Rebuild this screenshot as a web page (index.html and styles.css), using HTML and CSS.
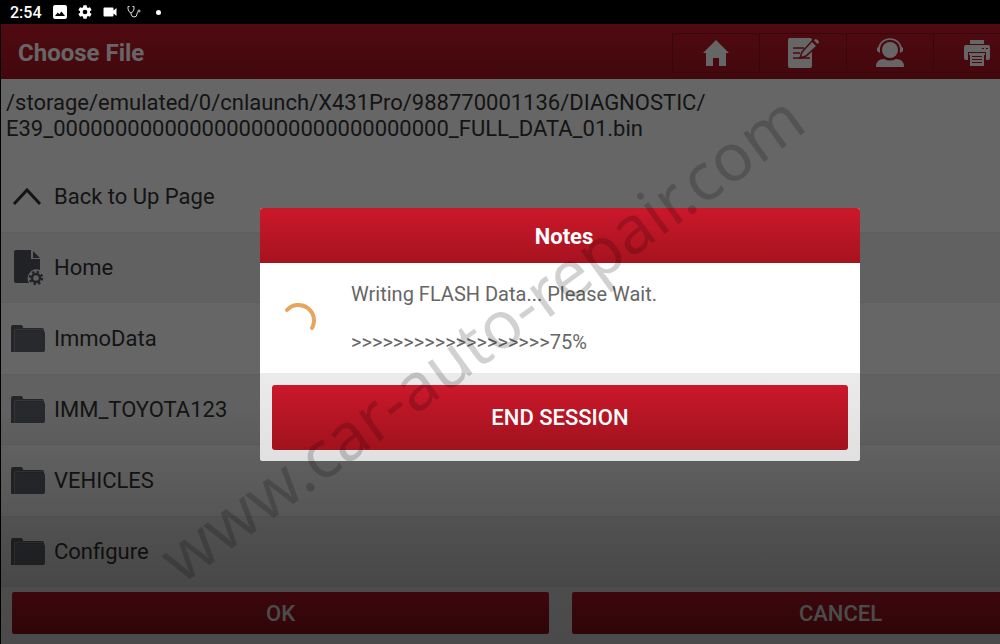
FILE: index.html
```html
<!DOCTYPE html>
<html lang="en">
<head>
    <meta charset="UTF-8">
    <meta name="viewport" content="width=device-width, initial-scale=1.0">
    <title>Choose File</title>
    <link rel="stylesheet" href="styles.css">
</head>
<body>
    <!-- shared icons -->
    <svg class="defs" aria-hidden="true">
        <symbol id="folder" viewBox="0 0 36 28">
            <path fill="#5a5c60" d="M1 2q0-2 2-2h8q2 0 2 3h19q2 0 2 2v22H1z"/>
            <path fill="#85878c" d="M4 27V6q0-2 2-2h28v1H7q-2 0-2 2v20z"/>
            <path fill="#63666e" d="M5 27V8q0-2 2-2h26q2 0 2 2v17q0 2-2 2z"/>
        </symbol>
    </svg>

    <div class="screen">
        <div class="status-bar">
            <span class="clock">2:54</span>
            <svg width="14" height="14" viewBox="0 0 14 14"><path fill="#fff" fill-rule="evenodd" d="M2 0h10q2 0 2 2v10q0 2-2 2H2q-2 0-2-2V2Q0 0 2 0zM2 11h10L8.500 6.500 6.300 9.300 4.800 7.500z"/></svg>
            <svg width="16" height="16" viewBox="0 0 24 24"><path fill="#fff" d="M19.400 13l.1-1-.1-1 2.200-1.700c.2-.2.200-.4.100-.6l-2-3.500c-.1-.2-.4-.3-.6-.2l-2.500 1-1.700-1L14.500 2.400c0-.2-.2-.4-.5-.4h-4c-.3 0-.5.2-.5.400L9.100 5 7.400 6l-2.500-1c-.2-.1-.5 0-.6.200l-2 3.500c-.1.200-.1.400.1.600L4.600 11l-.1 1 .1 1-2.200 1.700c-.2.200-.2.400-.1.600l2 3.500c.1.200.4.300.6.200l2.500-1 1.700 1 .4 2.600c0 .2.200.4.500.4h4c.3 0 .5-.2.500-.4l.4-2.600 1.700-1 2.500 1c.2.100.5 0 .6-.2l2-3.500c.1-.2.100-.4-.1-.6zM12 15.500a3.500 3.500 0 1 1 0-7 3.500 3.500 0 0 1 0 7z"/></svg>
            <svg width="14" height="14" viewBox="0 0 14 14"><path fill="#fff" d="M1.500 2.500h8q1 0 1 1v2L13.500 3v8L10.500 8.500v2q0 1-1 1h-8q-1 0-1-1v-7q0-1 1-1z"/></svg>
            <svg width="14" height="14" viewBox="0 0 14 14"><path fill="none" stroke="#ddd" d="M2.500 1.500H1V4q.5 3 3 4 2.500-1 3-4V1.500H5.500M4 8v1q.5 3 3 3 3 0 3-3 0-2 1.500-2.500"/><circle cx="12" cy="6" r="1" fill="none" stroke="#ddd"/></svg>
            <span class="dot"></span>
        </div>

        <header class="title-bar">
            <h1>Choose File</h1>
            <nav class="toolbar">
                <button type="button" aria-label="Home">
                    <svg width="28" height="28" viewBox="0 0 28 28"><path fill="#fff" d="M14 1 27 14h-3v13h-7v-8h-6v8H4V14H1z"/></svg>
                </button>
                <button type="button" aria-label="Edit">
                    <svg width="32" height="32" viewBox="0 0 32 32">
                        <path fill="#fff" d="M3 1h20q2 0 2 2v26q0 2-2 2H3q-2 0-2-2V3q0-2 2-2z"/>
                        <path stroke="#b5162a" stroke-width="1.500" d="M6 11h11M6 16h7M6 21h17"/>
                        <path fill="#fff" stroke="#b5162a" stroke-width="1.500" d="M15 15 25 4l5 5-11 10-6 2z"/>
                        <path fill="#fff" d="m27 3.500 1.500-1.500q3 .5 3.500 3.500l-1.500 1.500z"/>
                    </svg>
                </button>
                <button type="button" aria-label="Support">
                    <svg width="30" height="30" viewBox="0 0 30 30">
                        <path fill="none" stroke="#fff" stroke-width="1.500" d="M4 11a11 10 0 0 1 22 0"/>
                        <circle cx="15" cy="12" r="8" fill="#fff"/>
                        <path fill="#fff" d="M5 8v7l-3-2v-3zM25 8v7l3-2v-3zM1 29q0-8 8-8 6 3 12 0 8 0 8 8z"/>
                    </svg>
                </button>
                <button type="button" aria-label="Print">
                    <svg width="28" height="28" viewBox="0 0 28 28">
                        <path fill="#fff" d="M7 1h14v4H7zM3 6h22q2 0 2 2v11q0 2-2 2h-2v-8H5v8H3q-2 0-2-2V8q0-2 2-2z"/>
                        <path fill="#fff" d="M6 14h16v2h-1v11H7V16H6z"/>
                        <path stroke="#b5162a" d="M9 17.500h10M9 20.500h10M9 23.500h10M19 9.500h2M23 9.500h2"/>
                    </svg>
                </button>
            </nav>
        </header>

        <main class="browser">
            <p class="path">/storage/emulated/0/cnlaunch/X431Pro/988770001136/DIAGNOSTIC/<br>E39_00000000000000000000000000000000_FULL_DATA_01.bin</p>

            <ul class="files">
                <li>
                    <svg width="36" height="36" viewBox="0 0 36 36"><path fill="none" stroke="#333" stroke-width="3" d="M4 25 17 11l13 14"/></svg>
                    <span>Back to Up Page</span>
                </li>
                <li>
                    <svg width="36" height="36" viewBox="0 0 36 36">
                        <path fill="#53565f" d="M6 0h15v9h9v11a9 9 0 0 0-11 13H6q-2 0-2-2V2q0-2 2-2z"/>
                        <path fill="#53565f" d="m23 1 7 7h-7z"/>
                        <circle cx="26" cy="28" r="4" fill="none" stroke="#53565f" stroke-width="2.500"/>
                        <circle cx="26" cy="28" r="6" fill="none" stroke="#53565f" stroke-width="2.500" stroke-dasharray="2.300 2.412"/>
                    </svg>
                    <span>Home</span>
                </li>
                <li><svg width="36" height="28"><use href="#folder"/></svg><span>ImmoData</span></li>
                <li><svg width="36" height="28"><use href="#folder"/></svg><span>IMM_TOYOTA123</span></li>
                <li><svg width="36" height="28"><use href="#folder"/></svg><span>VEHICLES</span></li>
                <li><svg width="36" height="28"><use href="#folder"/></svg><span>Configure</span></li>
            </ul>
        </main>

        <footer class="actions">
            <button type="button" class="btn">OK</button>
            <button type="button" class="btn">CANCEL</button>
        </footer>

        <div class="backdrop">
            <section class="dialog" role="dialog" aria-labelledby="dialog-title">
                <h2 id="dialog-title">Notes</h2>
                <div class="dialog-body">
                    <svg class="spinner" width="36" height="36" viewBox="0 0 36 36"><path fill="none" stroke="#e8a55c" stroke-width="4" stroke-linecap="round" d="M3 10A15.500 15.500 0 0 1 28 28"/></svg>
                    <div class="message">
                        <p>Writing FLASH Data... Please Wait.</p>
                        <p>&gt;&gt;&gt;&gt;&gt;&gt;&gt;&gt;&gt;&gt;&gt;&gt;&gt;&gt;&gt;&gt;&gt;&gt;&gt;75%</p>
                    </div>
                </div>
                <div class="dialog-actions">
                    <button type="button" class="btn btn-large">END SESSION</button>
                </div>
            </section>
        </div>
    </div>

    <div class="watermark"><span>www.car-auto-repair.com</span></div>
</body>
</html>
```
FILE: styles.css
```css
* {
    box-sizing: border-box;
}

body {
    margin: 0;
    background-color: #000;
    font-family: Roboto, "Liberation Sans", sans-serif;
    font-size: 22px;
    overflow: hidden;
}

h1, h2, p, ul {
    margin: 0;
    padding: 0;
}

svg {
    display: block;
    flex: none;
}

.defs {
    position: absolute;
    width: 0;
    height: 0;
}

/* the tablet screen runs past the right edge of the window */
.screen {
    position: relative;
    display: flex;
    flex-direction: column;
    width: 112%;
    min-height: 100vh;
}

.status-bar {
    position: relative;
    z-index: 2;
    display: flex;
    align-items: center;
    gap: 10px;
    height: 24px;
    padding-left: 10px;
    background-color: #000;
    color: #fff;
}

.clock {
    margin-right: 1px;
    font-size: 16px;
    font-weight: 500;
}

.dot {
    width: 5px;
    height: 5px;
    margin-left: 5px;
    border-radius: 50%;
    background-color: #fff;
}

.title-bar {
    display: flex;
    align-items: center;
    justify-content: space-between;
    height: 55px;
    margin-left: 1px;
    padding: 2px 100px 0 17px;
    background: linear-gradient(#c9182b, #a3131f);
    color: #fff;
}

h1 {
    font-size: 24px;
    font-weight: 700;
}

.toolbar {
    display: flex;
}

.toolbar button {
    display: flex;
    align-items: center;
    justify-content: center;
    width: 87px;
    height: 40px;
    padding: 0;
    border: 1px solid #8c111c;
    border-right-width: 0;
    background: none;
}

.browser {
    flex: 1;
    margin-left: 1px;
    background-color: #fff;
    color: #333;
}

.path {
    height: 82px;
    padding: 11px 5px;
    line-height: 26px;
}

.files {
    list-style: none;
}

.files li {
    display: flex;
    align-items: center;
    gap: 8px;
    height: 71px;
    padding-left: 9px;
}

.files li:nth-child(even) {
    background-color: #f2f2f2;
    box-shadow: inset 0 1px #ebebeb, inset 0 -1px #ebebeb;
}

.actions {
    display: flex;
    gap: 23px;
    margin-left: 1px;
    padding: 5px 11px 10px;
    background-color: #fff;
}

.btn {
    flex: 1;
    height: 42px;
    padding: 0;
    border: none;
    border-radius: 2px;
    background: linear-gradient(#cb182b, #a0121d);
    color: #fff;
    font-family: inherit;
    font-size: 22px;
    font-weight: 500;
}

.btn-large {
    height: 65px;
    border-radius: 3px;
}

.backdrop {
    position: absolute;
    inset: 24px 0 0;
    display: flex;
    align-items: center;
    justify-content: center;
    background: linear-gradient(rgba(0, 0, 0, .6) 62%, rgba(0, 0, 0, .7) 90%, rgba(0, 0, 0, .71));
}

.dialog {
    width: 600px;
    border-radius: 3px;
    background-color: #fff;
    overflow: hidden;
}

.dialog h2 {
    padding: 2px 0 0 8px;
    background: linear-gradient(#cb182b, #a6131e);
    color: #fff;
    font-size: 22px;
    font-weight: 700;
    line-height: 53px;
    text-align: center;
}

.dialog-body {
    display: flex;
    align-items: center;
    gap: 31px;
    height: 110px;
    padding-left: 24px;
}

.message {
    display: flex;
    flex-direction: column;
    gap: 22px;
    color: #666;
    font-size: 20px;
    line-height: 26px;
}

.dialog-actions {
    display: flex;
    padding: 12px 12px 11px;
    background: linear-gradient(#ebebeb, #e0e0e0);
}

.watermark {
    position: fixed;
    inset: 28px 40px 0 0;
    display: flex;
    align-items: center;
    justify-content: center;
    pointer-events: none;
}

.watermark span {
    color: rgba(0, 0, 0, .18);
    font-family: "Noto Sans", "Open Sans", sans-serif;
    font-size: 66px;
    white-space: nowrap;
    transform: rotate(-36deg);
}
```
